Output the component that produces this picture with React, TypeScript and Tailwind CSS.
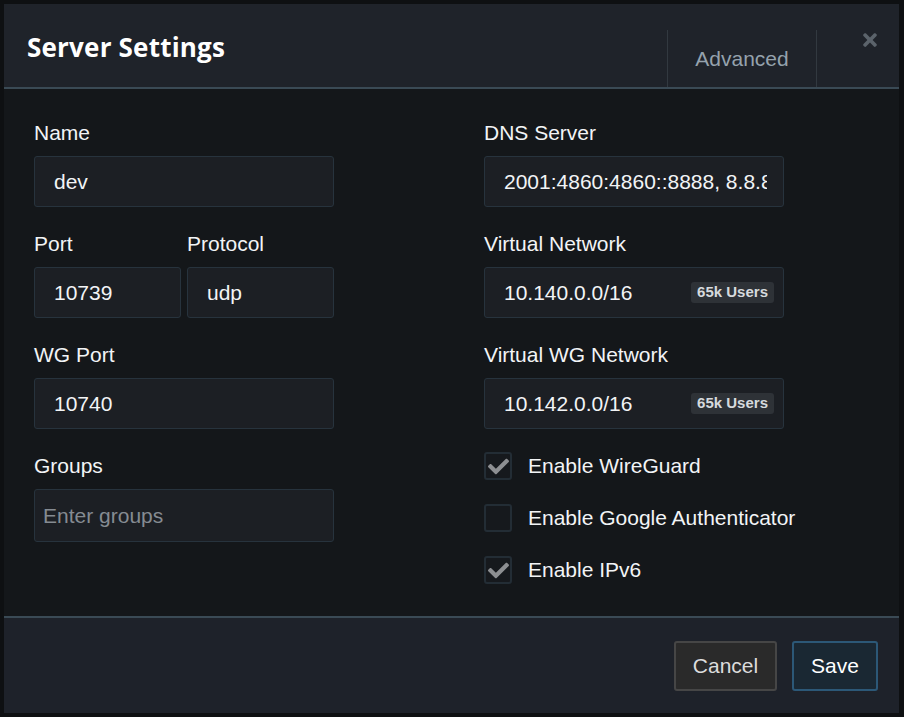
const CheckMark = () => (
  <svg viewBox="0 0 512 512" className="w-[21px] h-[21px]" fill="#8d8f92">
    <path d="M173.898 439.404l-166.4-166.4c-9.997-9.997-9.997-26.206 0-36.204l36.203-36.204c9.997-9.998 26.207-9.998 36.204 0L192 312.69 432.095 72.596c9.997-9.997 26.207-9.997 36.204 0l36.203 36.204c9.997 9.997 9.997 26.206 0 36.204l-294.4 294.401c-9.998 9.997-26.207 9.997-36.204-.001z" />
  </svg>
);

const Field = ({ label, children }: { label: string; children: React.ReactNode }) => (
  <div className="flex flex-col">
    <label className="h-[24px] leading-[24px] text-[21px] text-[#f2f4f6] whitespace-nowrap">{label}</label>
    <div className="mt-[11px]">{children}</div>
  </div>
);

const Input = ({ value, tag }: { value: string; tag?: string }) => (
  <div className="h-[51px] w-full flex items-center gap-[8px] pl-[19px] pr-[9px] bg-[#1c1f24] border border-[#27333d] rounded-[3px]">
    <span className={`flex-1 min-w-0 overflow-hidden text-[21px] text-[#f2f4f6] whitespace-nowrap ${tag ? '' : 'mr-[7px]'}`}>{value}</span>
    {tag && (
      <span className="h-[21px] px-[6px] flex items-center rounded-[3px] bg-[#2e3237] text-[15px] font-bold text-[#d6dadd] whitespace-nowrap">
        {tag}
      </span>
    )}
  </div>
);

const Check = ({ label, checked }: { label: string; checked: boolean }) => (
  <div className="flex items-center gap-[16px] h-[28px]">
    <div className="shrink-0 w-[28px] h-[28px] flex items-center justify-center bg-[#16191d] border-2 border-[#232d35] rounded-[3px]">
      {checked && <CheckMark />}
    </div>
    <span className="text-[21px] text-[#f2f4f6] whitespace-nowrap">{label}</span>
  </div>
);

export default function App() {
  return (
    <div className="w-[904px] h-[717px] bg-[#0e1012] p-[4px] pr-[5px] pb-[4px]" style={{ fontFamily: '"Liberation Sans", Arial, sans-serif' }}>
      <div className="w-[895px] h-[709px] flex flex-col bg-[#14171a]">
        {/* Header */}
        <div className="h-[85px] flex items-stretch bg-[#1f232a] border-b-2 border-[#3a4a55]">
          <h1 className="flex-1 pl-[23px] pt-[24px] text-[26px] font-bold text-white tracking-[0.2px]" style={{ fontFamily: '"Open Sans", sans-serif' }}>
            Server Settings
          </h1>
          <div className="mt-[26px] w-[150px] flex items-center justify-center border-l border-r border-[#323940] text-[21px] text-[#95a2ad]">
            Advanced
          </div>
          <div className="w-[82px] flex justify-end pr-[21px] pt-[26px]">
            <svg viewBox="0 0 352 512" className="w-[16px] h-[20px]" fill="#5b636b">
              <path d="M242.72 256l100.07-100.07c12.28-12.28 12.28-32.19 0-44.48l-22.24-22.24c-12.28-12.280-32.19-12.28-44.48 0L176 189.28 75.93 89.21c-12.28-12.28-32.19-12.28-44.48 0L9.21 111.45c-12.28 12.28-12.28 32.19 0 44.48L109.28 256 9.21 356.07c-12.28 12.28-12.28 32.19 0 44.48l22.240 22.24c12.28 12.28 32.2 12.28 44.48 0L176 322.72l100.07 100.07c12.28 12.28 32.2 12.28 44.480 0l22.24-22.24c12.28-12.28 12.28-32.19 0-44.48L242.72 256z" />
            </svg>
          </div>
        </div>

        {/* Body */}
        <div className="flex-1 flex gap-[150px] pl-[30px] pt-[32px]">
          <div className="w-[300px] flex flex-col gap-[25px]">
            <Field label="Name">
              <Input value="dev" />
            </Field>
            <div className="flex gap-[6px]">
              <div className="w-[147px]">
                <Field label="Port">
                  <Input value="10739" />
                </Field>
              </div>
              <div className="w-[147px]">
                <Field label="Protocol">
                  <Input value="udp" />
                </Field>
              </div>
            </div>
            <Field label="WG Port">
              <Input value="10740" />
            </Field>
            <Field label="Groups">
              <div className="h-[53px] flex items-center pl-[8px] bg-[#1c1f24] border border-[#27333d] rounded-[3px]">
                <span className="text-[21px] text-[#858b92]">Enter groups</span>
              </div>
            </Field>
          </div>
          <div className="w-[300px] flex flex-col gap-[25px]">
            <Field label="DNS Server">
              <Input value="2001:4860:4860::8888, 8.8.8.8" />
            </Field>
            <Field label="Virtual Network">
              <Input value="10.140.0.0/16" tag="65k Users" />
            </Field>
            <Field label="Virtual WG Network">
              <Input value="10.142.0.0/16" tag="65k Users" />
            </Field>
            <div className="-mt-[2px] flex flex-col gap-[24px]">
              <Check label="Enable WireGuard" checked />
              <Check label="Enable Google Authenticator" checked={false} />
              <Check label="Enable IPv6" checked />
            </div>
          </div>
        </div>

        {/* Footer */}
        <div className="h-[97px] flex items-center justify-end gap-[15px] pr-[21px] bg-[#1e222a] border-t-2 border-[#3a4a55]">
          <button className="h-[50px] w-[103px] bg-[#2a2a2a] border-2 border-[#464646] rounded-[3px] text-[21px] text-[#dcdcdc]">
            Cancel
          </button>
          <button className="h-[50px] w-[86px] bg-[#1a2833] border-2 border-[#2c5877] rounded-[3px] text-[21px] text-white">
            Save
          </button>
        </div>
      </div>
    </div>
  );
}
